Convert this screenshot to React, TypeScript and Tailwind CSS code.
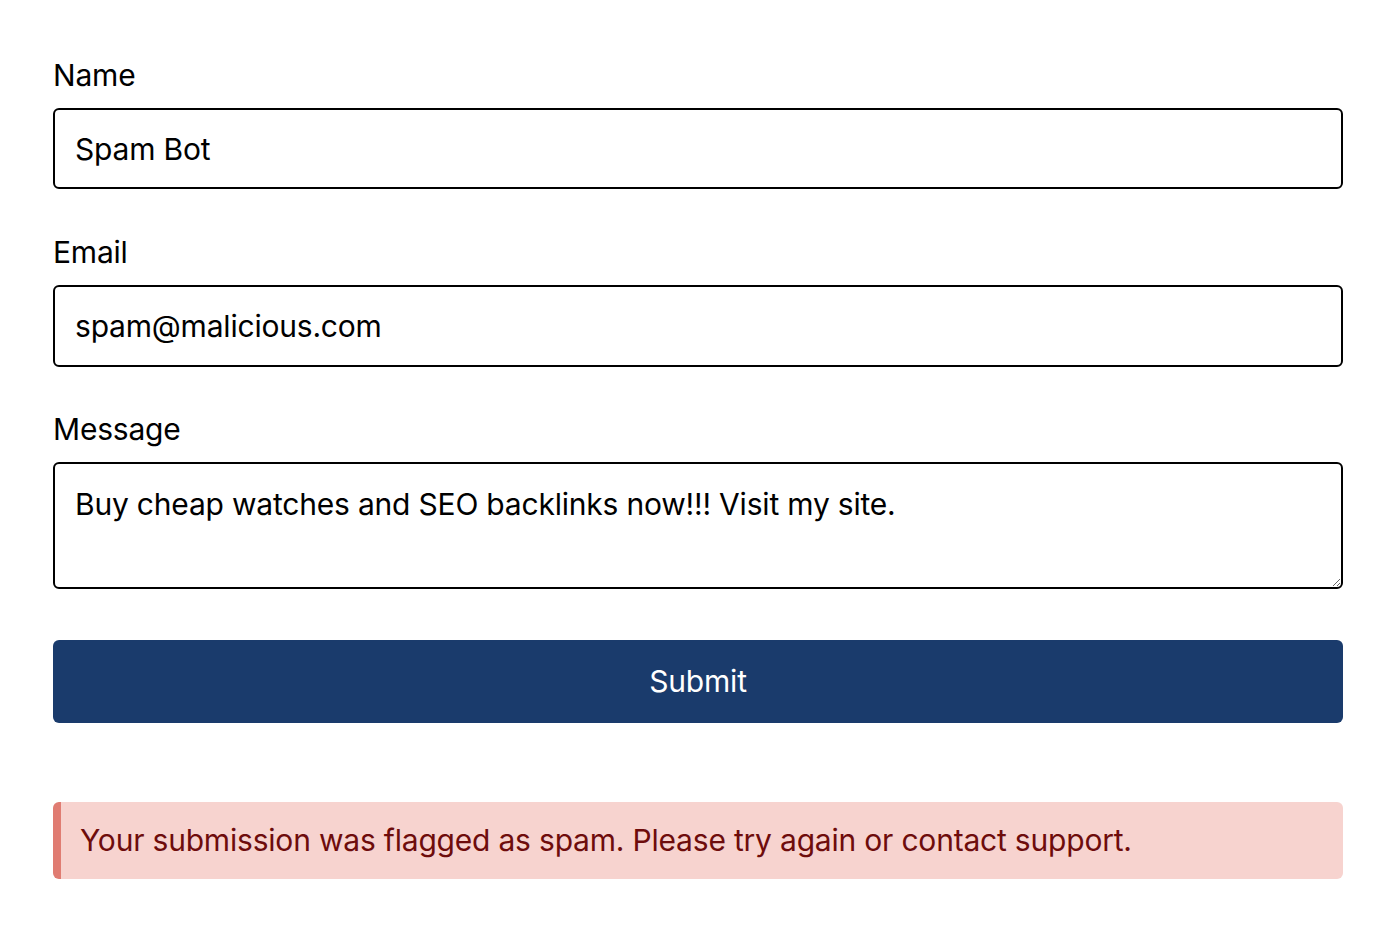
import { useState } from 'react';

export default function App() {
  const [name, setName] = useState('Spam Bot');
  const [email, setEmail] = useState('spam@malicious.com');
  const [message, setMessage] = useState('Buy cheap watches and SEO backlinks now!!! Visit my site.');

  return (
    <div className="min-h-screen bg-white pl-[53px] pr-[51px] pt-[53px] text-black" style={{ fontFamily: 'Inter, "Noto Sans", sans-serif' }}>
      <form className="flex flex-col" onSubmit={(e) => e.preventDefault()}>
        <label className="block text-[30px] leading-[45px] tracking-[-0.2px] mb-[10px]">Name</label>
        <input
          value={name}
          onChange={(e) => setName(e.target.value)}
          className="h-[81px] w-full rounded-[6px] border-2 border-black px-[20px] text-[30px] tracking-[-0.2px] outline-none mb-[41px]"
        />

        <label className="block text-[30px] leading-[45px] tracking-[-0.2px] mb-[10px]">Email</label>
        <input
          value={email}
          onChange={(e) => setEmail(e.target.value)}
          className="h-[82px] w-full rounded-[6px] border-2 border-black px-[20px] text-[30px] tracking-[-0.2px] outline-none mb-[40px]"
        />

        <label className="block text-[30px] leading-[45px] tracking-[-0.2px] mb-[10px]">Message</label>
        <textarea
          value={message}
          onChange={(e) => setMessage(e.target.value)}
          className="h-[127px] w-full rounded-[6px] border-2 border-black px-[20px] pt-[22px] pb-[17px] text-[30px] leading-[1.2] tracking-[-0.2px] outline-none mb-[51px]"
        />

        <button
          type="submit"
          className="h-[83px] w-full rounded-[6px] bg-[#1a3b6c] text-[30px] tracking-[-0.2px] text-white"
        >
          Submit
        </button>
      </form>

      <div className="mt-[79px] flex h-[77px] items-center rounded-[6px] border-l-[8px] border-[#e07c72] bg-[#f7d3cf] pl-[19px] text-[30px] tracking-[-0.2px] text-[#6e0c0c]">
        Your submission was flagged as spam. Please try again or contact support.
      </div>
    </div>
  );
}
